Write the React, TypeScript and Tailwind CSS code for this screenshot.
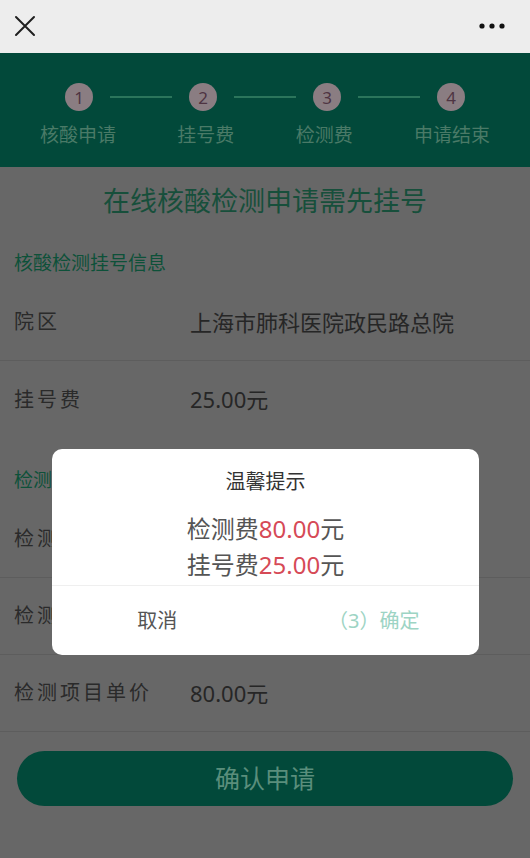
import React from "react";

const font = { fontFamily: '"Noto Sans", "Noto Sans CJK SC", sans-serif' };

function Step({ n }: { n: number }) {
  return (
    <div className="w-[28px] h-[28px] rounded-full bg-[#8a7d82] flex items-center justify-center text-[17px] leading-none text-[#4e3442]">
      {n}
    </div>
  );
}

function Row({ label, value, last }: { label: string; value?: string; last?: boolean }) {
  return (
    <div className={`flex items-center h-[77px] pl-[14px] ${last ? "" : "border-b border-[#5d5d5d]"}`}>
      <div className="w-[176px] text-[20px] tracking-[3px] text-[#2a2a2a]">{label}</div>
      {value ? <div className="text-[22px] text-[#262626]">{value}</div> : null}
    </div>
  );
}

function FeeLine({ name, amount }: { name: string; amount: string }) {
  return (
    <div className="flex justify-center h-[36px] items-center text-[24px] leading-[32px]">
      <span className="text-[#555]">{name}</span>
      <span className="text-[#d64a56]">{amount}</span>
      <span className="text-[#555]">元</span>
    </div>
  );
}

export default function App() {
  return (
    <div className="relative w-[530px] h-[858px] overflow-hidden bg-[#676767]" style={font}>
      {/* nav bar */}
      <div className="h-[53px] bg-[#ededed] flex items-center justify-between px-[13px]">
        <svg width="22" height="22" viewBox="0 0 22 22" className="ml-[1px] -mt-[2px]">
          <path d="M2 2 L20 20 M20 2 L2 20" stroke="#1f1f1f" strokeWidth="2" strokeLinecap="round" />
        </svg>
        <svg width="26" height="8" viewBox="0 0 26 8" className="mr-[12px] -mt-[1px]">
          <circle cx="3" cy="4" r="2.6" fill="#111" />
          <circle cx="13" cy="4" r="2.6" fill="#111" />
          <circle cx="23" cy="4" r="2.6" fill="#111" />
        </svg>
      </div>

      {/* steps header */}
      <div className="h-[114px] bg-[#02493a] pt-[30px]">
        <div className="flex items-center px-[65px]">
          <Step n={1} />
          <div className="flex-1 h-[2px] bg-[#2b755b] mx-[17px]" />
          <Step n={2} />
          <div className="flex-1 h-[2px] bg-[#2b755b] mx-[17px]" />
          <Step n={3} />
          <div className="flex-1 h-[2px] bg-[#2b755b] mx-[17px]" />
          <Step n={4} />
        </div>
        <div className="flex justify-between px-[40px] mt-[12px] text-[19px] leading-[24px] text-[#4a7a67]">
          <span>核酸申请</span>
          <span>挂号费</span>
          <span>检测费</span>
          <span>申请结束</span>
        </div>
      </div>

      {/* title */}
      <div className="h-[75px] flex justify-center pt-[16px] text-[27px] leading-[36px] text-[#174f3b]">
        在线核酸检测申请需先挂号
      </div>

      <div className="h-[42px] flex items-center pl-[14px] text-[19px] text-[#0d5139]">核酸检测挂号信息</div>
      <Row label="院区" value="上海市肺科医院政民路总院" />
      <Row label="挂号费" value="25.00元" last />

      <div className="h-[21px]" />
      <div className="h-[42px] flex items-center pl-[14px] text-[19px] text-[#0d5139]">检测项目信息</div>
      <Row label="检测项目" />
      <Row label="检测数量" />
      <Row label="检测项目单价" value="80.00元" />

      <div className="px-[17px] pt-[19px]">
        <div className="h-[55px] rounded-full bg-[#02493a] flex items-center justify-center text-[25px] text-[#5a8e7c]">
          确认申请
        </div>
      </div>

      {/* modal */}
      <div className="absolute left-[52px] top-[449px] w-[427px] h-[206px] bg-white rounded-[10px] flex flex-col">
        <div className="pt-[19px] text-center text-[20px] leading-[28px] text-[#333]">温馨提示</div>
        <div className="mt-[15px]">
          <FeeLine name="检测费" amount="80.00" />
          <FeeLine name="挂号费" amount="25.00" />
        </div>
        <div className="mt-[2px] border-t border-[#efefef] flex-1 flex items-center text-[20px]">
          <div className="flex-1 text-center text-[#555]">取消</div>
          <div className="flex-1 text-center text-[#9dd4c4] pl-[6px]">（3）确定</div>
        </div>
      </div>
    </div>
  );
}
